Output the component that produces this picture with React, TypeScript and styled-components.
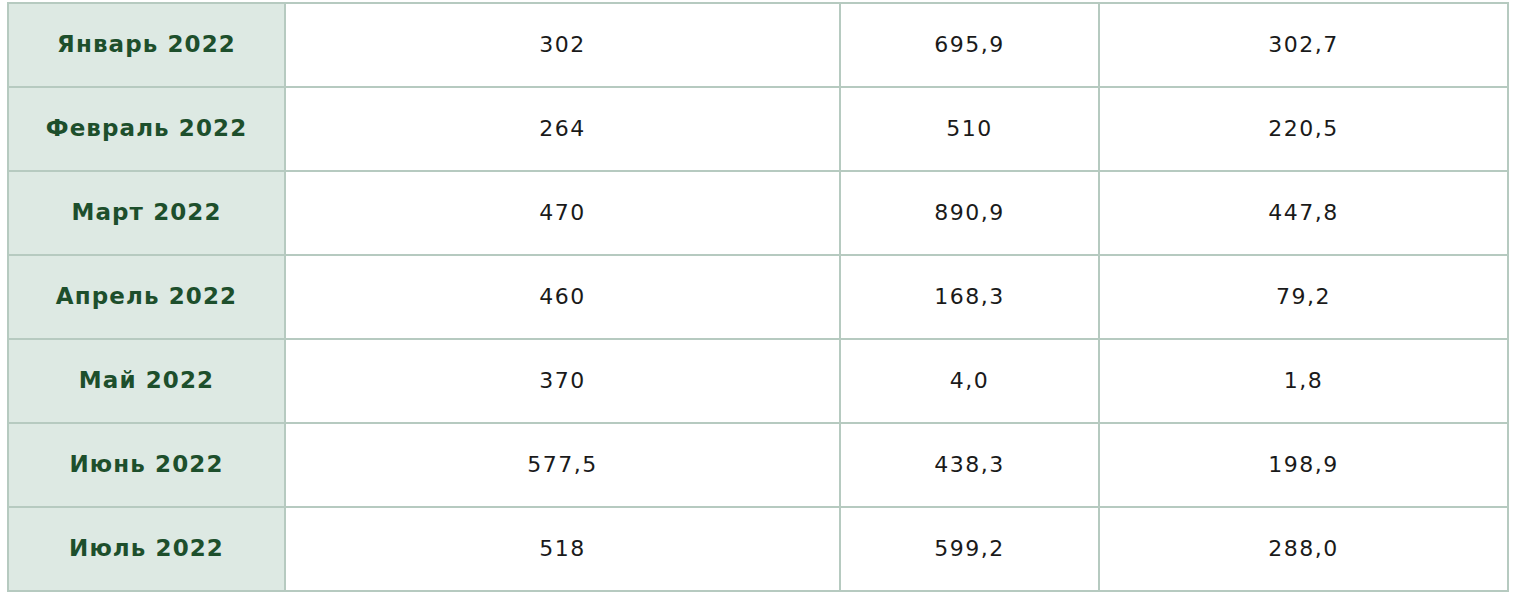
import React from 'react';
import styled, { createGlobalStyle } from 'styled-components';

const GlobalStyle = createGlobalStyle`
  html, body {
    margin: 0;
    padding: 0;
    background: #ffffff;
  }
`;

const Page = styled.div`
  padding: 2px 6px 0 7px;
`;

const Table = styled.table`
  width: 1502px;
  border-collapse: collapse;
  border: 2px solid #b6cac0;
  font-family: 'DejaVu Sans', Verdana, sans-serif;
  table-layout: fixed;
`;

const Row = styled.tr`
  height: 84px;
`;

const Cell = styled.td<{ $label?: boolean }>`
  border: 2px solid #b6cac0;
  text-align: center;
  vertical-align: middle;
  padding: 0 0 2px;
  font-size: ${(p) => (p.$label ? '23px' : '22px')};
  letter-spacing: ${(p) => (p.$label ? '1.1px' : '1.5px')};
  background: ${(p) => (p.$label ? '#dde9e3' : '#ffffff')};
  color: ${(p) => (p.$label ? '#1d4f2c' : '#1a1a1a')};
  font-weight: ${(p) => (p.$label ? 700 : 400)};
`;

const rows = [
  ['Январь 2022', '302', '695,9', '302,7'],
  ['Февраль 2022', '264', '510', '220,5'],
  ['Март 2022', '470', '890,9', '447,8'],
  ['Апрель 2022', '460', '168,3', '79,2'],
  ['Май 2022', '370', '4,0', '1,8'],
  ['Июнь 2022', '577,5', '438,3', '198,9'],
  ['Июль 2022', '518', '599,2', '288,0'],
];

export default function App() {
  return (
    <>
      <GlobalStyle />
      <Page>
        <Table>
          <colgroup>
            <col style={{ width: 277 }} />
            <col style={{ width: 555 }} />
            <col style={{ width: 259 }} />
            <col />
          </colgroup>
          <tbody>
            {rows.map((r) => (
              <Row key={r[0]}>
                <Cell $label>{r[0]}</Cell>
                <Cell>{r[1]}</Cell>
                <Cell>{r[2]}</Cell>
                <Cell>{r[3]}</Cell>
              </Row>
            ))}
          </tbody>
        </Table>
      </Page>
    </>
  );
}
